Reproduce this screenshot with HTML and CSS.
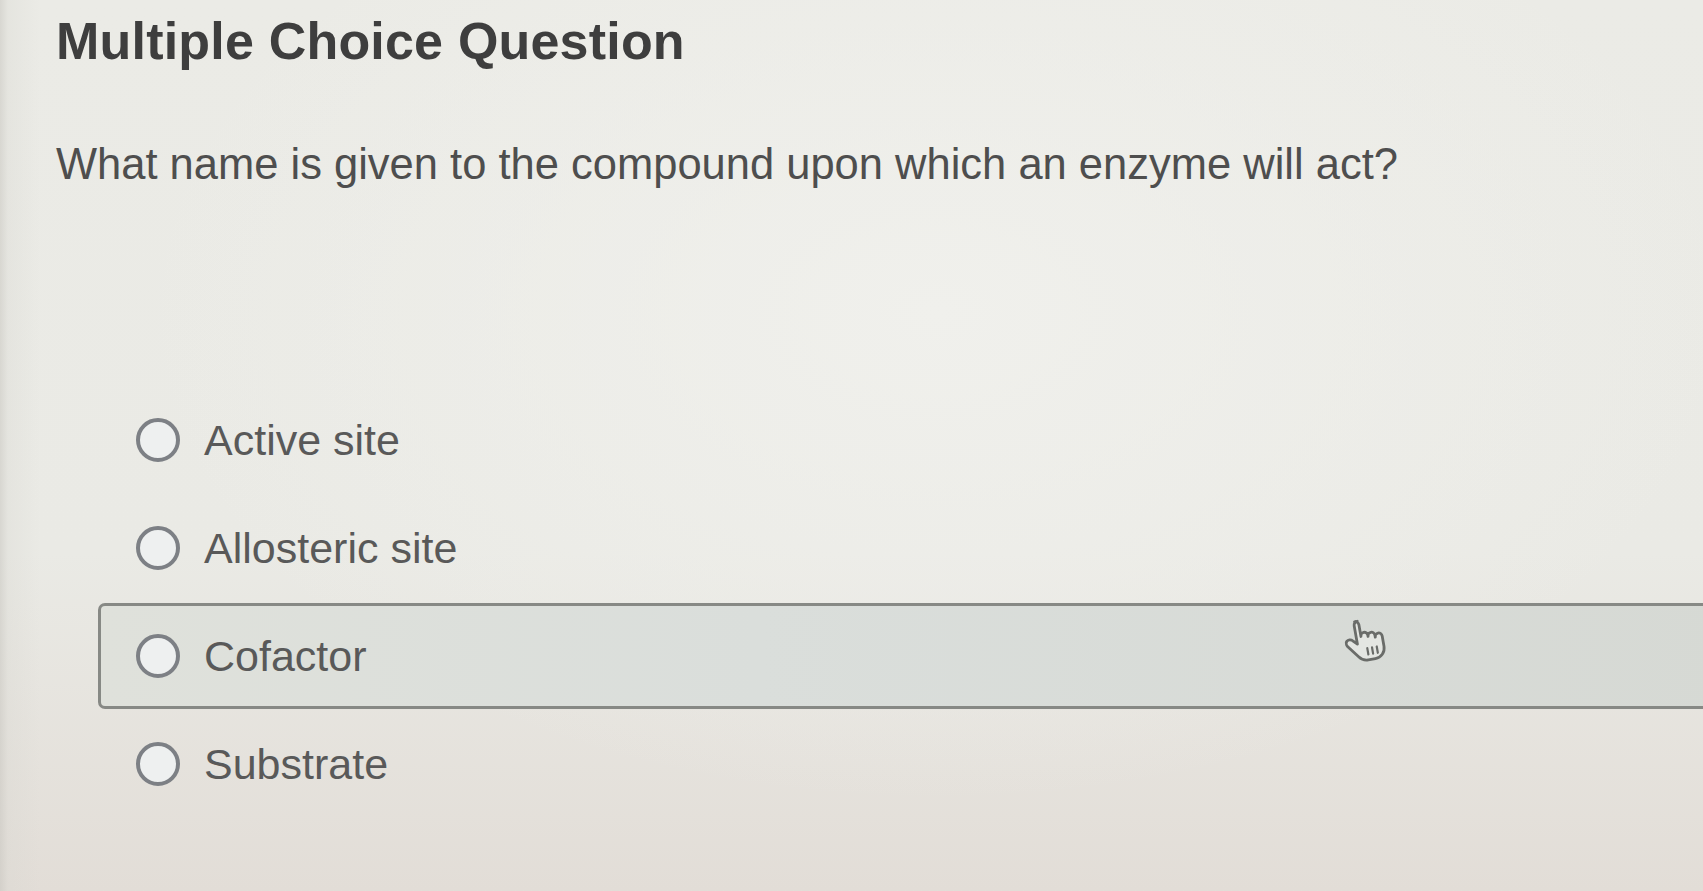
FILE: index.html
```html
<!DOCTYPE html>
<html lang="en">
<head>
<meta charset="utf-8">
<title>Multiple Choice Question</title>
<link rel="stylesheet" href="styles.css">
</head>
<body>
<main class="page">
  <h1 class="title">Multiple Choice Question</h1>
  <p class="question">What name is given to the compound upon which an enzyme will act?</p>
  <ul class="options">
    <li class="option"><span class="radio"></span><span class="label">Active site</span></li>
    <li class="option"><span class="radio"></span><span class="label">Allosteric site</span></li>
    <li class="option option-hover">
      <span class="radio"></span><span class="label">Cofactor</span>
      <svg class="cursor" viewBox="1 1.5 22 23.5" width="44" height="48" aria-hidden="true">
        <path d="M9 2.2c-1 0-1.9.9-1.9 1.9v9.4l-2-2.1c-.8-.9-2.2-1-3-.2-.7.7-.7 1.8-.1 2.6l4.6 6c1.1 1.5 2.7 2.4 4.5 2.4h3.6c3 0 5.3-2.4 5.3-5.4v-5.2c0-1-.8-1.8-1.8-1.8s-1.7.8-1.7 1.8v-1c0-1-.8-1.8-1.8-1.8s-1.7.8-1.7 1.8v-.6c0-1-.8-1.8-1.8-1.8s-1.7.8-1.7 1.8V4.1c0-1-.9-1.9-1.9-1.9z" fill="#e4e6e2" stroke="#6a6c69" stroke-width="1.4" stroke-linejoin="round"/>
        <path d="M11.6 16.3v3.2M14 16.3v3.2M16.4 16.3v3.2" stroke="#6a6c69" stroke-width="1.1" stroke-linecap="round"/>
      </svg>
    </li>
    <li class="option"><span class="radio"></span><span class="label">Substrate</span></li>
  </ul>
</main>
</body>
</html>
```
FILE: styles.css
```css
html, body {
  margin: 0;
  padding: 0;
  height: 100%;
  overflow: hidden;
}

body {
  font-family: "Liberation Sans", Arial, sans-serif;
  background:
    linear-gradient(90deg, rgba(200,198,192,0.55) 0px, rgba(215,214,208,0.3) 8px, rgba(230,230,225,0) 40px),
    radial-gradient(ellipse at 55% 35%, #f0f0ec 0%, rgba(240,240,236,0) 60%),
    linear-gradient(180deg, #ebebe6 0%, #eaeae5 62%, #e2ddd7 100%);
  color: #555;
}

.page {
  padding: 10px 0 0 56px;
}

.title {
  margin: 0;
  font-size: 52px;
  line-height: 62px;
  font-weight: 700;
  color: #3e3e3e;
  letter-spacing: 0.2px;
}

.question {
  margin: 66px 0 0 0;
  font-size: 43.5px;
  line-height: 52px;
  color: #4e4e4e;
}

.options {
  list-style: none;
  margin: 198px -40px 0 42px;
  padding: 0;
  display: flex;
  flex-direction: column;
  gap: 4px;
}

.option {
  position: relative;
  display: flex;
  align-items: center;
  gap: 24px;
  height: 104px;
  box-sizing: border-box;
  padding-left: 35px;
  border: 3px solid transparent;
  border-radius: 7px;
}

.option-hover {
  height: 106px;
  margin: -1px 0;
  border-color: #878985;
  background: linear-gradient(90deg, #dfe1db 0%, #dadedb 40%, #d6d9d4 100%);
}

.radio {
  width: 44px;
  height: 44px;
  box-sizing: border-box;
  border: 4.5px solid #7d8085;
  border-radius: 50%;
  background: #eef0f0;
  flex: none;
}

.label {
  font-size: 43px;
  line-height: 52px;
  color: #595959;
}

.cursor {
  position: absolute;
  left: 1244px;
  top: 12px;
  transform: rotate(-10deg);
}
```
